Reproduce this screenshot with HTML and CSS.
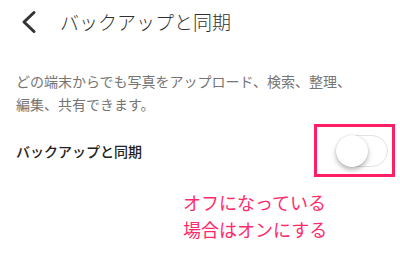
FILE: index.html
```html
<!DOCTYPE html>
<html lang="ja">
<head>
<meta charset="utf-8">
<link rel="stylesheet" href="styles.css">
</head>
<body>
<div class="page">
  <header class="header">
    <svg class="back" width="16" height="24" viewBox="0 0 16 24">
      <polyline points="13,2.5 3,12 13,21.5" fill="none" stroke="#333" stroke-width="3" stroke-linecap="round" stroke-linejoin="round"/>
    </svg>
    <h1 class="title">バックアップと同期</h1>
  </header>
  <p class="desc">どの端末からでも写真をアップロード、検索、整理、<br>編集、共有できます。</p>
  <div class="row">
    <span class="label">バックアップと同期</span>
    <div class="switch-wrap">
      <div class="switch"><div class="knob"></div></div>
      <div class="highlight"></div>
    </div>
  </div>
  <p class="note">オフになっている<br>場合はオンにする</p>
</div>
</body>
</html>
```
FILE: styles.css
```css
html, body {
  margin: 0;
  padding: 0;
  background: #fff;
}
body {
  font-family: "Noto Sans CJK JP", "Noto Sans", sans-serif;
}
.page {
  padding: 0 12px 0 16px;
}
.header {
  display: flex;
  align-items: center;
  height: 44px;
}
.back {
  margin-left: 5px;
  flex: none;
}
.title {
  margin: 0 0 0 23px;
  font-size: 19px;
  font-weight: 300;
  color: #2f2f2f;
  line-height: 24px;
}
.desc {
  margin: 26px 0 0;
  font-size: 14px;
  line-height: 23px;
  color: #757575;
  font-weight: 400;
}
.row {
  margin-top: 9px;
  height: 52px;
  display: flex;
  align-items: center;
  justify-content: space-between;
}
.label {
  font-size: 14px;
  font-weight: 500;
  color: #222;
}
.switch-wrap {
  position: relative;
}
.switch {
  width: 50px;
  height: 30px;
  border: 1.5px solid #e3e3e3;
  border-radius: 17px;
  background: #fff;
  position: relative;
}
.knob {
  position: absolute;
  left: -1.5px;
  top: -1.5px;
  width: 32px;
  height: 32px;
  border-radius: 50%;
  background: #fff;
  box-shadow: 0 0 0 0.5px rgba(0,0,0,0.08), 0 3px 5px rgba(0,0,0,0.28);
}
.highlight {
  position: absolute;
  left: -22px;
  top: -11px;
  width: 75px;
  height: 47px;
  border: 3px solid #ff1f64;
}
.note {
  margin: 12px 0 0;
  padding-left: 167px;
  font-size: 18px;
  line-height: 27px;
  color: #ff2a6a;
}
```
